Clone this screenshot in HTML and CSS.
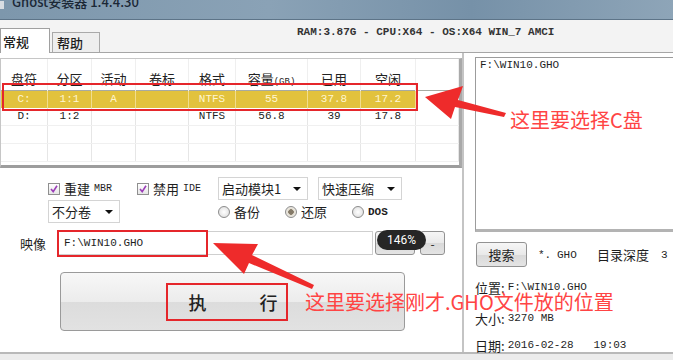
FILE: index.html
```html
<!DOCTYPE html>
<html lang="zh-CN">
<head>
    <meta charset="UTF-8">
    <meta name="viewport" content="width=device-width, initial-scale=1.0">
    <title>Ghost安装器 1.4.4.30</title>
    <link rel="stylesheet" href="styles.css">
</head>
<body>
    <div class="title-bar">
        <span class="app-icon"></span>
        <span class="title">Ghost安装器 1.4.4.30</span>
    </div>
    <div class="tab-bar">
        <div class="tab active">常规</div>
        <div class="tab">帮助</div>
        <div class="sys-info">RAM:3.87G - CPU:X64 - OS:X64 WIN_7 AMCI</div>
    </div>
    <div class="panel">
        <div class="left-col">
            <div class="disk-table">
                <div class="row head">
                    <div>盘符</div><div>分区</div><div>活动</div><div>卷标</div><div>格式</div>
                    <div>容量<small>(GB)</small></div><div>已用</div><div>空闲</div><div></div>
                </div>
                <div class="row sel">
                    <div>C:</div><div>1:1</div><div>A</div><div></div><div>NTFS</div>
                    <div>55</div><div>37.8</div><div>17.2</div><div></div>
                </div>
                <div class="row">
                    <div>D:</div><div>1:2</div><div></div><div></div><div>NTFS</div>
                    <div>56.8</div><div>39</div><div>17.8</div><div></div>
                </div>
                <div class="row">
                    <div></div><div></div><div></div><div></div><div></div><div></div><div></div><div></div><div></div>
                </div>
                <div class="row">
                    <div></div><div></div><div></div><div></div><div></div><div></div><div></div><div></div><div></div>
                </div>
            </div>

            <div class="opt-row first">
                <label class="check wide">
                    <span class="box"><svg viewBox="0 0 10 10"><path d="M2 5 L4.2 7.6 L8 1.8" fill="none" stroke="#9b3db8" stroke-width="1.6"/></svg></span>
                    重建<span class="mono small">MBR</span>
                </label>
                <label class="check">
                    <span class="box"><svg viewBox="0 0 10 10"><path d="M2 5 L4.2 7.6 L8 1.8" fill="none" stroke="#9b3db8" stroke-width="1.6"/></svg></span>
                    禁用<span class="mono small">IDE</span>
                </label>
                <div class="select boot">启动模块1<span class="caret"></span></div>
                <div class="select comp">快速压缩<span class="caret"></span></div>
            </div>
            <div class="opt-row">
                <div class="select split">不分卷<span class="caret"></span></div>
                <label class="radio gap"><span class="dot"></span>备份</label>
                <label class="radio"><span class="dot on"></span>还原</label>
                <label class="radio"><span class="dot"></span><span class="mono dos">DOS</span></label>
            </div>

            <div class="img-row">
                <span class="img-label">映像</span>
                <div class="text-input mono">F:\WIN10.GHO</div>
                <button class="btn browse">...</button>
                <button class="btn minus">-</button>
            </div>

            <button class="exec"><span class="exec-text"><span>执</span><span>行</span></span></button>
        </div>

        <div class="right-col">
            <div class="listbox mono">F:\WIN10.GHO</div>
            <div class="search-row">
                <button class="btn search">搜索</button>
                <span class="ext-label mono">*.</span>
                <div class="small-input mono">GHO</div>
                <span class="depth-label">目录深度</span>
                <div class="small-input depth mono">3</div>
            </div>
            <div class="info first">位置: <span class="mono">F:\WIN10.GHO</span></div>
            <div class="info second">大小: <span class="mono">3270 MB</span></div>
            <div class="info third">日期: <span class="mono">2016-02-28&nbsp;&nbsp;&nbsp;19:03</span></div>
        </div>
    </div>
    <div class="status-bar"></div>

    <!-- annotations drawn over the window -->
    <div class="mark mark-row"></div>
    <div class="mark mark-img"></div>
    <svg class="arrows" viewBox="0 0 673 360">
        <polygon points="425,97 463,86 458,100 506,113 504,117 455,107 451,119" fill="#ee2b2b"/>
        <polygon points="213,243 258,244 252,255 314,285 312,289 249,263 244,274" fill="#ee2b2b"/>
    </svg>
    <div class="note note-c">这里要选择C盘</div>
    <div class="note note-gho">这里要选择刚才.GHO文件放的位置</div>
    <div class="zoom-pill">146%</div>
</body>
</html>
```

FILE: styles.css
```css
body {
    margin: 0;
    width: 673px;
    height: 360px;
    overflow: hidden;
    position: relative;
    background-color: #ececec;
    font-family: "Noto Sans CJK SC", sans-serif;
    font-size: 13px;
    color: #1e1e1e;
}

.mono {
    font-family: "Liberation Mono", "Noto Sans CJK SC", monospace;
    font-size: 11px;
}

.small {
    font-size: 10px;
}

/* Title bar */
.title-bar {
    height: 20px;
    box-sizing: border-box;
    display: flex;
    overflow: hidden;
    background: linear-gradient(to right, #7d97ac, #8aa2b6 40%, #7691a8 70%, #8ea5b8);
    border-bottom: 1px solid #5d7488;
}

.app-icon {
    width: 4px;
    height: 8px;
    margin-top: 1px;
    background-color: #d8dde2;
}

.title {
    margin-left: 8px;
    margin-top: -6px;
    line-height: 16px;
    font-weight: 500;
    color: #1b2836;
}

/* Tabs */
.tab-bar {
    height: 32px;
    display: flex;
    align-items: flex-end;
    background-color: #f3f3f3;
    position: relative;
    z-index: 1;
}

.tab {
    width: 48px;
    height: 20px;
    box-sizing: border-box;
    margin-left: 2px;
    padding-left: 4px;
    line-height: 19px;
    background-color: #eeeeee;
    border: 1px solid #a9a9a9;
    border-bottom: none;
    font-weight: 500;
}

.tab.active {
    width: 50px;
    height: 25px;
    margin-left: 0;
    margin-bottom: -1px;
    padding-left: 2px;
    line-height: 26px;
    background-color: #fff;
    border-color: #a0a0a0;
}

.sys-info {
    align-self: flex-start;
    margin-top: 6px;
    margin-left: 197px;
    font-family: "Liberation Mono", monospace;
    font-size: 11px;
    font-weight: bold;
    color: #333;
}

/* Main panel */
.panel {
    display: flex;
    height: 300px;
    box-sizing: border-box;
    background-color: #fff;
    border-top: 1px solid #a6a6a6;
}

.left-col {
    width: 462px;
    flex: none;
    padding-top: 5px;
}

.right-col {
    flex: 1;
    border-left: 2px solid #c4c4c4;
    padding: 4px 0 0 11px;
}

.status-bar {
    height: 8px;
    border-top: 2px solid #b9b9b9;
    background-color: #ececec;
}

/* Partition table */
.disk-table {
    height: 110px;
    box-sizing: border-box;
    background-color: #fff;
    border: 1px solid #c6c6c6;
    border-right: 3px solid #a9a9a9;
    border-bottom: 3px solid #9d9d9d;
    overflow: hidden;
}

.row {
    display: grid;
    grid-template-columns: 47px 44px 44px 53px 47px 72px 53px 55px 43px;
    height: 18px;
    box-sizing: border-box;
    border-bottom: 1px solid #f0f0f0;
}

.row > div {
    border-right: 1px solid #e6e6e6;
    text-align: center;
    line-height: 17px;
    font-family: "Liberation Mono", monospace;
    font-size: 11px;
    color: #222;
}

.row.head {
    height: 31px;
    border-bottom: none;
}

.row.head > div {
    padding-top: 10px;
    line-height: 20px;
    font-family: "Noto Sans CJK SC", sans-serif;
    font-size: 13px;
    border-right-color: #efefef;
}

.row.head small {
    font-family: "Liberation Mono", monospace;
    font-size: 9px;
}

.row.sel {
    background-color: #e2c23d;
    border-top: 1px solid #a7aaa2;
    border-bottom: none;
}

.row.sel > div {
    color: #fff6d2;
    border-right-color: #f1dd8e;
}

.row.sel > div:last-child {
    background-color: #fff;
    border-right: none;
}

/* Options */
.opt-row {
    display: flex;
    align-items: center;
    height: 23px;
    padding-left: 48px;
}

.opt-row.first {
    margin-top: 9px;
}

.check {
    width: 81px;
    display: flex;
    align-items: center;
    gap: 4px;
}

.check.wide {
    width: 89px;
}

.box {
    width: 10px;
    height: 10px;
    flex: none;
    border: 1px solid #8f8f8f;
    background: linear-gradient(#ffffff, #e6e6e6);
}

.box svg {
    display: block;
    width: 10px;
    height: 10px;
}

.select {
    height: 23px;
    box-sizing: border-box;
    display: flex;
    align-items: center;
    justify-content: space-between;
    padding: 0 6px 0 3px;
    background-color: #fff;
    border: 1px solid #d4d4d4;
}

.select.boot {
    width: 90px;
}

.select.comp {
    width: 84px;
    margin-left: 10px;
}

.select.split {
    width: 72px;
}

.caret {
    width: 0;
    height: 0;
    border-left: 4px solid transparent;
    border-right: 4px solid transparent;
    border-top: 4px solid #111;
}

.radio {
    width: 67px;
    display: flex;
    align-items: center;
    gap: 4px;
}

.radio.gap {
    margin-left: 98px;
}

.dot {
    width: 12px;
    height: 12px;
    box-sizing: border-box;
    border-radius: 50%;
    border: 1px solid #8c8c8c;
    background: radial-gradient(circle, #ffffff, #d9d9d9);
}

.dot.on {
    background: radial-gradient(circle, #857a68 0 2.5px, #e4dfd3 3px, #f4f4f4);
}

.dos {
    font-weight: bold;
}

/* Image path */
.img-row {
    display: flex;
    align-items: center;
    height: 24px;
    margin-top: 8px;
}

.img-label {
    width: 37px;
    padding-left: 20px;
}

.text-input {
    width: 316px;
    height: 24px;
    box-sizing: border-box;
    padding-left: 6px;
    line-height: 22px;
    background-color: #fff;
    border: 1px solid #cfcfcf;
}

.btn {
    height: 24px;
    padding: 0;
    font-family: "Noto Sans CJK SC", sans-serif;
    font-size: 12px;
    color: #222;
    background: linear-gradient(#f6f6f6, #e9e9e9 50%, #d9d9d9 51%, #e4e4e4);
    border: 1px solid #929292;
    border-radius: 3px;
}

.btn.browse {
    width: 40px;
    margin-left: 2px;
}

.btn.minus {
    width: 25px;
    margin-left: 5px;
}

.exec {
    display: flex;
    align-items: center;
    justify-content: center;
    width: 345px;
    height: 59px;
    margin: 17px 0 0 60px;
    padding: 0 12px 0 0;
    background: linear-gradient(#f7f7f7, #ececec 50%, #dcdcdc 51%, #e2e2e2);
    border: 1px solid #9a9a9a;
    border-radius: 4px;
}

.exec-text {
    width: 122px;
    height: 38px;
    box-sizing: border-box;
    display: flex;
    align-items: center;
    justify-content: space-between;
    padding: 0 8px 0 21px;
    border: 2px solid #e5262b;
    font-family: "Noto Sans CJK SC", sans-serif;
    font-size: 18px;
    font-weight: 500;
    color: #222;
}

/* Right side */
.listbox {
    width: 205px;
    height: 175px;
    box-sizing: border-box;
    padding: 0 4px;
    line-height: 14px;
    background-color: #fff;
    border: 1px solid #9c9c9c;
    border-bottom: 3px solid #b3b3b3;
}

.search-row {
    display: flex;
    align-items: center;
    height: 25px;
    margin-top: 10px;
}

.btn.search {
    width: 51px;
    height: 25px;
    margin-left: 1px;
    font-size: 13px;
}

.ext-label {
    width: 15px;
    margin-left: 11px;
}

.small-input {
    width: 37px;
    height: 24px;
    box-sizing: border-box;
    padding-left: 4px;
    line-height: 24px;
    background-color: #fff;
}

.depth-label {
    width: 58px;
    margin-left: 7px;
}

.small-input.depth {
    width: 30px;
    margin-left: 2px;
}

.info {
    height: 16px;
    display: flex;
    align-items: center;
    gap: 3px;
    white-space: nowrap;
}

.info.first {
    margin-top: 12px;
}

.info.second {
    margin-top: 15px;
}

.info.third {
    margin-top: 11px;
}

/* Annotation overlays */
.mark {
    position: absolute;
    box-sizing: border-box;
    border: 2px solid #e5262b;
}

.mark-row {
    left: 2px;
    top: 83px;
    width: 416px;
    height: 28px;
}

.mark-img {
    left: 57px;
    top: 230px;
    width: 151px;
    height: 27px;
}

.arrows {
    position: absolute;
    left: 0;
    top: 0;
    width: 673px;
    height: 360px;
    pointer-events: none;
}

.note {
    position: absolute;
    font-size: 20px;
    line-height: 22px;
    color: #ff4444;
    white-space: nowrap;
}

.note-c {
    left: 510px;
    top: 109px;
}

.note-gho {
    left: 305px;
    top: 291px;
}

.zoom-pill {
    position: absolute;
    left: 377px;
    top: 230px;
    width: 49px;
    height: 20px;
    display: flex;
    align-items: center;
    justify-content: center;
    border-radius: 10px;
    background-color: #262626;
    color: #fff;
    font-family: Roboto, sans-serif;
    font-size: 12px;
}
```
